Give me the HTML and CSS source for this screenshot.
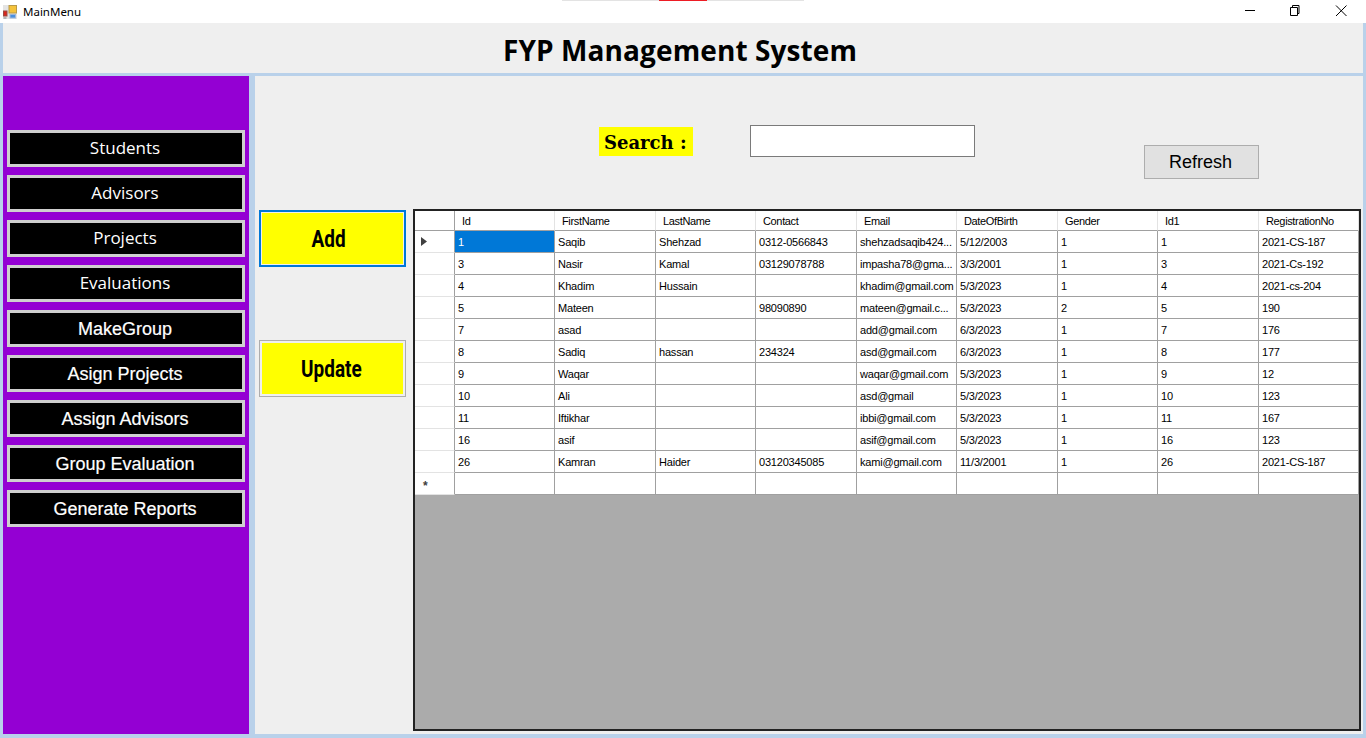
FILE: index.html
```html
<!DOCTYPE html>
<html lang="en">
<head>
  <meta charset="UTF-8">
  <title>MainMenu</title>
  <link rel="stylesheet" href="styles.css">
</head>
<body>
  <!-- window title bar -->
  <div class="titlebar">
    <svg class="app-icon" width="14" height="14" viewBox="0 0 14 14">
      <rect x="0" y="0" width="14" height="14" fill="#e4e4e4"/>
      <rect x="6" y="0.5" width="7.5" height="7.5" fill="#f5c33b" stroke="#b89a4a" stroke-width="1"/>
      <rect x="0.500" y="6" width="3.500" height="5" fill="#d8261c" stroke="#9a4a42" stroke-width="1"/>
      <rect x="7" y="9.500" width="5.500" height="3.500" fill="#4a8fe0" stroke="#9fb8d8" stroke-width="1"/>
      <rect x="0.500" y="12" width="3" height="2" fill="#b5b5b5"/>
    </svg>
    <span class="app-name">MainMenu</span>
    <div class="win-btns">
      <svg width="46" height="23" viewBox="0 0 46 23"><path d="M19 10.500h10" stroke="#000" stroke-width="1" fill="none"/></svg>
      <svg width="46" height="23" viewBox="0 0 46 23"><path d="M18.500 7.500h7v8h-7zM20.500 7.500v-2h6.500v8h-1.500" stroke="#000" stroke-width="1" fill="none"/></svg>
      <svg width="46" height="23" viewBox="0 0 46 23"><path d="M18 5.500l10.500 10.500M28.500 5.500l-10.500 10.500" stroke="#000" stroke-width="1" fill="none"/></svg>
    </div>
    <div class="top-strip"><span class="top-strip-red"></span></div>
  </div>

  <div class="window">
    <header class="header">FYP Management System</header>

    <div class="main">
      <!-- left menu -->
      <nav class="sidebar">
        <button class="nav-btn nav-light">Students</button>
        <button class="nav-btn nav-light">Advisors</button>
        <button class="nav-btn nav-light">Projects</button>
        <button class="nav-btn nav-light">Evaluations</button>
        <button class="nav-btn">MakeGroup</button>
        <button class="nav-btn">Asign Projects</button>
        <button class="nav-btn">Assign Advisors</button>
        <button class="nav-btn">Group Evaluation</button>
        <button class="nav-btn">Generate Reports</button>
      </nav>

      <section class="content">
        <div class="tools">
          <label class="search-label">Search :</label>
          <input class="search-box" type="text">
          <button class="refresh-btn">Refresh</button>
        </div>

        <div class="body">
          <div class="actions">
            <button class="action-btn action-focus"><span class="action-text">Add</span></button>
            <button class="action-btn"><span class="action-text">Update</span></button>
          </div>

          <!-- data grid -->
          <div class="grid-wrap">
            <table class="grid">
              <colgroup>
                <col class="col-head"><col class="col-a"><col class="col-b"><col class="col-a"><col class="col-b"><col class="col-a"><col class="col-b"><col class="col-a"><col class="col-b"><col class="col-a">
              </colgroup>
              <thead>
                <tr>
                  <th class="row-head"></th>
                  <th>Id</th><th>FirstName</th><th>LastName</th><th>Contact</th><th>Email</th><th>DateOfBirth</th><th>Gender</th><th>Id1</th><th>RegistrationNo</th>
                </tr>
              </thead>
              <tbody>
                <tr>
                  <td class="row-head"><svg class="row-arrow" width="6" height="9" viewBox="0 0 6 9"><path d="M0 0l6 4.500-6 4.500z" fill="#404040"/></svg></td>
                  <td class="cell-selected">1</td><td>Saqib</td><td>Shehzad</td><td>0312-0566843</td><td>shehzadsaqib424...</td><td>5/12/2003</td><td>1</td><td>1</td><td>2021-CS-187</td>
                </tr>
                <tr><td class="row-head"></td><td>3</td><td>Nasir</td><td>Kamal</td><td>03129078788</td><td>impasha78@gma...</td><td>3/3/2001</td><td>1</td><td>3</td><td>2021-Cs-192</td></tr>
                <tr><td class="row-head"></td><td>4</td><td>Khadim</td><td>Hussain</td><td></td><td>khadim@gmail.com</td><td>5/3/2023</td><td>1</td><td>4</td><td>2021-cs-204</td></tr>
                <tr><td class="row-head"></td><td>5</td><td>Mateen</td><td></td><td>98090890</td><td>mateen@gmail.c...</td><td>5/3/2023</td><td>2</td><td>5</td><td>190</td></tr>
                <tr><td class="row-head"></td><td>7</td><td>asad</td><td></td><td></td><td>add@gmail.com</td><td>6/3/2023</td><td>1</td><td>7</td><td>176</td></tr>
                <tr><td class="row-head"></td><td>8</td><td>Sadiq</td><td>hassan</td><td>234324</td><td>asd@gmail.com</td><td>6/3/2023</td><td>1</td><td>8</td><td>177</td></tr>
                <tr><td class="row-head"></td><td>9</td><td>Waqar</td><td></td><td></td><td>waqar@gmail.com</td><td>5/3/2023</td><td>1</td><td>9</td><td>12</td></tr>
                <tr><td class="row-head"></td><td>10</td><td>Ali</td><td></td><td></td><td>asd@gmail</td><td>5/3/2023</td><td>1</td><td>10</td><td>123</td></tr>
                <tr><td class="row-head"></td><td>11</td><td>Iftikhar</td><td></td><td></td><td>ibbi@gmail.com</td><td>5/3/2023</td><td>1</td><td>11</td><td>167</td></tr>
                <tr><td class="row-head"></td><td>16</td><td>asif</td><td></td><td></td><td>asif@gmail.com</td><td>5/3/2023</td><td>1</td><td>16</td><td>123</td></tr>
                <tr><td class="row-head"></td><td>26</td><td>Kamran</td><td>Haider</td><td>03120345085</td><td>kami@gmail.com</td><td>11/3/2001</td><td>1</td><td>26</td><td>2021-CS-187</td></tr>
                <tr><td class="row-head"><span class="new-row">*</span></td><td></td><td></td><td></td><td></td><td></td><td></td><td></td><td></td><td></td></tr>
              </tbody>
            </table>
          </div>
        </div>
      </section>
    </div>
  </div>
</body>
</html>
```

FILE: styles.css
```css
* {
  margin: 0;
  padding: 0;
  box-sizing: border-box;
}

html, body {
  width: 1366px;
  height: 738px;
  overflow: hidden;
  background-color: #b9d1ea;
  font-family: "Liberation Sans", Arial, sans-serif;
}

/* title bar */
.titlebar {
  position: relative;
  display: flex;
  align-items: center;
  height: 23px;
  background-color: #fff;
  padding-left: 3px;
}

.app-icon {
  margin-right: 6px;
}

.app-name {
  font-family: "Noto Sans", sans-serif;
  font-size: 11.500px;
  color: #000;
}

.win-btns {
  display: flex;
  margin-left: auto;
  margin-right: 2px;
}

.top-strip {
  position: absolute;
  left: 562px;
  top: 0;
  width: 242px;
  height: 1px;
  background-color: #e3e3e3;
}

.top-strip-red {
  position: absolute;
  left: 97px;
  top: 0;
  width: 48px;
  height: 1px;
  background-color: #ed1c24;
}

/* window body */
.window {
  display: flex;
  flex-direction: column;
  height: 715px;
  padding: 0 3px 4px;
}

.header {
  height: 50px;
  background-color: #efefef;
  padding-top: 9px;
  padding-left: 500px;
  font-family: "Open Sans", sans-serif;
  font-size: 28px;
  font-weight: 700;
  letter-spacing: 0.1px;
  line-height: 36px;
  color: #000;
}

.main {
  display: flex;
  flex: 1;
  gap: 6px;
  margin-top: 3px;
  min-height: 0;
}

/* left menu */
.sidebar {
  display: flex;
  flex-direction: column;
  gap: 8px;
  width: 246px;
  padding: 54px 4px 0;
  background-color: #9400d3;
}

.nav-btn {
  width: 238px;
  height: 37px;
  padding: 2px 2px 0 0;
  background-color: #000;
  border: 3px solid #cfcfcf;
  color: #fff;
  font-family: "Liberation Sans", Arial, sans-serif;
  font-size: 18px;
  -webkit-text-stroke: 0.2px #fff;
}

.nav-light {
  padding: 0 2px 2px 0;
  font-family: "Open Sans", sans-serif;
  font-size: 17px;
  -webkit-text-stroke: 0;
}

/* right part */
.content {
  display: flex;
  flex: 1;
  flex-direction: column;
  background-color: #efefef;
}

.tools {
  display: flex;
  align-items: flex-start;
  height: 133px;
}

.search-label {
  margin-top: 51px;
  margin-left: 344px;
  width: 94px;
  height: 29px;
  padding-left: 5px;
  background-color: #ff0;
  font-family: "DejaVu Serif", serif;
  font-size: 18px;
  font-weight: 700;
  line-height: 31px;
  color: #000;
}

.search-box {
  width: 225px;
  height: 32px;
  margin-top: 49px;
  margin-left: 57px;
  border: 1px solid #7a7a7a;
  background-color: #fff;
}

.refresh-btn {
  width: 115px;
  height: 34px;
  margin-top: 69px;
  margin-left: 169px;
  padding: 1px 2px 0 0;
  background-color: #e1e1e1;
  border: 1px solid #adadad;
  font-family: "Liberation Sans", Arial, sans-serif;
  font-size: 18px;
  color: #000;
}

.body {
  display: flex;
  flex: 1;
  min-height: 0;
  padding: 0 2px 3px 4px;
}

.actions {
  display: flex;
  flex-direction: column;
  gap: 73px;
  width: 147px;
  margin-right: 7px;
  padding-top: 1px;
}

.action-btn {
  width: 147px;
  height: 57px;
  padding-right: 2px;
  background-color: #ff0;
  border: 3px solid #efefef;
  outline: 1px solid #adadad;
  outline-offset: -1px;
  font-family: Roboto, sans-serif;
  font-size: 24px;
  font-weight: 700;
  color: #000;
}

.action-text {
  display: inline-block;
  transform: scaleX(0.79);
}

.action-focus {
  padding-right: 8px;
  border: 2px solid #0078d7;
  outline: none;
  box-shadow: inset 0 0 0 1px #efefef;
}

/* data grid */
.grid-wrap {
  flex: 1;
  border: 2px solid #222;
  background-color: #ababab;
  overflow: hidden;
}

.grid {
  width: 944px;
  table-layout: fixed;
  border-collapse: separate;
  border-spacing: 0;
  background-color: #fff;
  font-size: 11px;
  letter-spacing: -0.2px;
  color: #000;
}

.col-head { width: 40px; }
.col-a { width: 100px; }
.col-b { width: 101px; }

.grid th {
  height: 20px;
  padding-left: 7px;
  font-weight: 400;
  letter-spacing: -0.35px;
  text-align: left;
  border-right: 1px solid #e3e3e3;
  border-bottom: 1px solid #a0a0a0;
}

.grid td {
  height: 22px;
  padding-left: 3px;
  white-space: nowrap;
  overflow: hidden;
  border-right: 1px solid #a0a0a0;
  border-bottom: 1px solid #a0a0a0;
}

.grid .row-head {
  padding-left: 0;
  border-right: 1px solid #a0a0a0;
  border-bottom: 1px solid #e3e3e3;
}

.grid thead .row-head {
  border-bottom: 1px solid #a0a0a0;
}

.grid .cell-selected {
  background-color: #0078d7;
  color: #fff;
}

.row-arrow {
  display: block;
  margin-left: 6px;
}

.new-row {
  display: block;
  margin-left: 8px;
  font-size: 12px;
  font-weight: 700;
  line-height: 12px;
  padding-top: 4px;
  color: #404040;
}
```
